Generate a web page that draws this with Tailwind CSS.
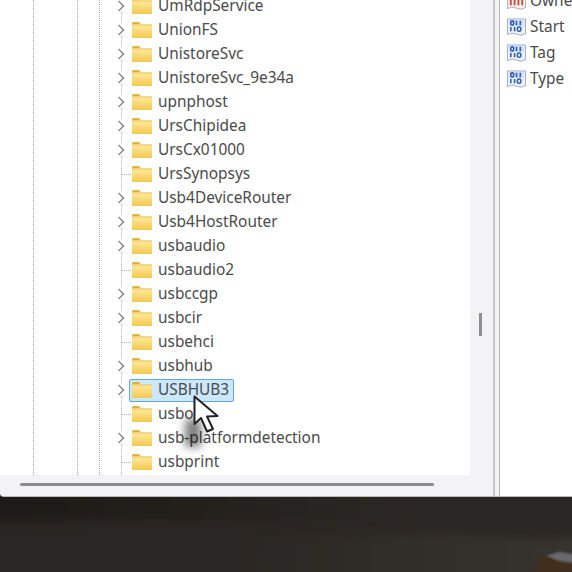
<!DOCTYPE html>
<html><head><meta charset="utf-8"><script src="https://cdn.jsdelivr.net/npm/@tailwindcss/browser@4"></script></head>
<body class="m-0 bg-[#2b2723]">
<div class="relative w-[572px] h-[572px] overflow-hidden bg-[#2a2622] flex flex-col font-['Noto_Sans','Open_Sans',sans-serif] text-[#4a4a4a]">
  <svg width="0" height="0" class="absolute"><defs>
    <linearGradient id="fg" x1="0" y1="0" x2="0" y2="1"><stop offset="0" stop-color="#fdeaa3"/><stop offset="1" stop-color="#f4c94f"/></linearGradient>
    <linearGradient id="dl" x1="0" y1="0" x2="1" y2="0"><stop offset="0" stop-color="#1d1916"/><stop offset="0.5" stop-color="#231f1b"/><stop offset="1" stop-color="#2b2724"/></linearGradient>
    <linearGradient id="lt" x1="0" y1="0" x2="1" y2="0"><stop offset="0" stop-color="#2b2724"/><stop offset="1" stop-color="#38352f"/></linearGradient>
    <symbol id="folder" viewBox="0 0 20 18"><path d="M0 2.500Q0 1 1.500 1H7l2 2.500H0z" fill="#e2b138"/><path d="M0 3.500h20v13.500H0z" fill="url(#fg)"/><path d="M0 4h20" stroke="#e9bf50" stroke-width="1"/></symbol>
    <symbol id="chev" viewBox="0 0 8 12"><path d="M1.500 1l5 5-5 5" fill="none" stroke="#8f8f8f" stroke-width="1.600"/></symbol>
    <symbol id="reg" viewBox="0 0 22 20"><path d="M1.500 1h19v15.500q-5 3-9.500 .5t-9.500 .5z" fill="#eef0fa" stroke="#a3a9c9"/><rect x="3" y="2" width="16" height="6.500" fill="#d5dff8"/><g fill="none" stroke="#2f62b3" stroke-width="1.700"><rect x="5" y="3" width="3" height="4.500" rx="1.400"/><path d="M11 3v4.500M15 3v4.500"/><path d="M5 9.500v4.500M9 9.500v4.500"/><rect x="12" y="9.500" width="3.500" height="4.500" rx="1.400"/></g></symbol>
    <symbol id="regred" viewBox="0 0 22 20"><path d="M1.500 1h19v15.500q-5 3-9.500 .5t-9.500 .5z" fill="#f7eeee" stroke="#b9a7a7"/><path d="M5 3v11M9 3v11M13 3v11M17 3v11" stroke="#c9503f" stroke-width="2"/></symbol>
  </defs></svg>

  <div class="flex h-[497px] shrink-0 bg-[#f3f2f5] border-b border-[#b9b9b9] rounded-bl-[4px]">
    <div class="flex flex-col w-[492px] shrink-0 bg-[#f3f2f5] rounded-bl-[4px]">
      <div class="relative w-[470px] h-[475px] bg-white overflow-hidden">
        <div class="absolute top-0 bottom-0 left-[33px] border-l border-dotted border-[#a3a3a3]"></div>
        <div class="absolute top-0 bottom-0 left-[77px] border-l border-dotted border-[#a3a3a3]"></div>
        <div class="absolute top-0 bottom-0 left-[99px] border-l border-dotted border-[#a3a3a3]"></div>
        <div class="absolute top-0 bottom-0 left-[121px] border-l border-dotted border-[#b5b5b5]"></div>
        <ul class="relative -mt-[6px] pl-[117px] text-[15.4px] leading-6">
          <li class="flex items-center h-6"><span class="w-[15px] bg-white flex"><svg class="w-2 h-3"><use href="#chev"/></svg></span><svg class="w-5 h-[18px]"><use href="#folder"/></svg><span class="ml-[6px] pb-[1px]">UmRdpService</span></li>
          <li class="flex items-center h-6"><span class="w-[15px] bg-white flex"><svg class="w-2 h-3"><use href="#chev"/></svg></span><svg class="w-5 h-[18px]"><use href="#folder"/></svg><span class="ml-[6px] pb-[1px]">UnionFS</span></li>
          <li class="flex items-center h-6"><span class="w-[15px] bg-white flex"><svg class="w-2 h-3"><use href="#chev"/></svg></span><svg class="w-5 h-[18px]"><use href="#folder"/></svg><span class="ml-[6px] pb-[1px]">UnistoreSvc</span></li>
          <li class="flex items-center h-6"><span class="w-[15px] bg-white flex"><svg class="w-2 h-3"><use href="#chev"/></svg></span><svg class="w-5 h-[18px]"><use href="#folder"/></svg><span class="ml-[6px] pb-[1px]">UnistoreSvc_9e34a</span></li>
          <li class="flex items-center h-6"><span class="w-[15px] bg-white flex"><svg class="w-2 h-3"><use href="#chev"/></svg></span><svg class="w-5 h-[18px]"><use href="#folder"/></svg><span class="ml-[6px] pb-[1px]">upnphost</span></li>
          <li class="flex items-center h-6"><span class="w-[15px] bg-white flex"><svg class="w-2 h-3"><use href="#chev"/></svg></span><svg class="w-5 h-[18px]"><use href="#folder"/></svg><span class="ml-[6px] pb-[1px]">UrsChipidea</span></li>
          <li class="flex items-center h-6"><span class="w-[15px] bg-white flex"><svg class="w-2 h-3"><use href="#chev"/></svg></span><svg class="w-5 h-[18px]"><use href="#folder"/></svg><span class="ml-[6px] pb-[1px]">UrsCx01000</span></li>
          <li class="flex items-center h-6"><span class="w-[15px] flex items-center"><span class="w-[10px] ml-[4px] border-t border-dotted border-[#b5b5b5]"></span></span><svg class="w-5 h-[18px]"><use href="#folder"/></svg><span class="ml-[6px] pb-[1px]">UrsSynopsys</span></li>
          <li class="flex items-center h-6"><span class="w-[15px] bg-white flex"><svg class="w-2 h-3"><use href="#chev"/></svg></span><svg class="w-5 h-[18px]"><use href="#folder"/></svg><span class="ml-[6px] pb-[1px]">Usb4DeviceRouter</span></li>
          <li class="flex items-center h-6"><span class="w-[15px] bg-white flex"><svg class="w-2 h-3"><use href="#chev"/></svg></span><svg class="w-5 h-[18px]"><use href="#folder"/></svg><span class="ml-[6px] pb-[1px]">Usb4HostRouter</span></li>
          <li class="flex items-center h-6"><span class="w-[15px] bg-white flex"><svg class="w-2 h-3"><use href="#chev"/></svg></span><svg class="w-5 h-[18px]"><use href="#folder"/></svg><span class="ml-[6px] pb-[1px]">usbaudio</span></li>
          <li class="flex items-center h-6"><span class="w-[15px] flex items-center"><span class="w-[10px] ml-[4px] border-t border-dotted border-[#b5b5b5]"></span></span><svg class="w-5 h-[18px]"><use href="#folder"/></svg><span class="ml-[6px] pb-[1px]">usbaudio2</span></li>
          <li class="flex items-center h-6"><span class="w-[15px] bg-white flex"><svg class="w-2 h-3"><use href="#chev"/></svg></span><svg class="w-5 h-[18px]"><use href="#folder"/></svg><span class="ml-[6px] pb-[1px]">usbccgp</span></li>
          <li class="flex items-center h-6"><span class="w-[15px] bg-white flex"><svg class="w-2 h-3"><use href="#chev"/></svg></span><svg class="w-5 h-[18px]"><use href="#folder"/></svg><span class="ml-[6px] pb-[1px]">usbcir</span></li>
          <li class="flex items-center h-6"><span class="w-[15px] flex items-center"><span class="w-[10px] ml-[4px] border-t border-dotted border-[#b5b5b5]"></span></span><svg class="w-5 h-[18px]"><use href="#folder"/></svg><span class="ml-[6px] pb-[1px]">usbehci</span></li>
          <li class="flex items-center h-6"><span class="w-[15px] bg-white flex"><svg class="w-2 h-3"><use href="#chev"/></svg></span><svg class="w-5 h-[18px]"><use href="#folder"/></svg><span class="ml-[6px] pb-[1px]">usbhub</span></li>
          <li class="flex items-center h-6"><span class="w-[15px] bg-white flex"><svg class="w-2 h-3"><use href="#chev"/></svg></span><span class="flex items-center h-[23px] -ml-[3px] pl-[3px] pr-[4px] rounded-[2px] bg-[#cce8ff] border border-[#5fa8e0]"><svg class="w-5 h-[18px] -ml-[1px]"><use href="#folder"/></svg><span class="ml-[6px] pb-[1px]">USBHUB3</span></span></li>
          <li class="flex items-center h-6"><span class="w-[15px] flex items-center"><span class="w-[10px] ml-[4px] border-t border-dotted border-[#b5b5b5]"></span></span><svg class="w-5 h-[18px]"><use href="#folder"/></svg><span class="ml-[6px] pb-[1px]">usbo<span class="text-white">hci</span></span></li>
          <li class="flex items-center h-6"><span class="w-[15px] bg-white flex"><svg class="w-2 h-3"><use href="#chev"/></svg></span><svg class="w-5 h-[18px]"><use href="#folder"/></svg><span class="ml-[6px] pb-[1px]">usb-platformdetection</span></li>
          <li class="flex items-center h-6"><span class="w-[15px] flex items-center"><span class="w-[10px] ml-[4px] border-t border-dotted border-[#b5b5b5]"></span></span><svg class="w-5 h-[18px]"><use href="#folder"/></svg><span class="ml-[6px] pb-[1px]">usbprint</span></li>
        </ul>
      </div>
      <div class="flex-1 flex items-center pl-5 pb-[2px]">
        <div class="w-[414px] h-[3px] rounded-full bg-[#8b8b8b]"></div>
      </div>
    </div>
    <div class="w-[2px] bg-[#c4c4c8] shrink-0 ml-[1px]"></div>
    <div class="w-[4px] shrink-0 bg-[#f3f2f5]"></div>
    <div class="flex-1 min-w-0 overflow-hidden bg-white border-l border-[#b5b5b5]">
      <ul class="-mt-[12px] pl-[6px] text-[15.4px]">
        <li class="flex items-center gap-[3px] h-[26px]"><svg class="w-[21px] h-[19px] shrink-0"><use href="#regred"/></svg><span class="pb-[1px]">Owner</span></li>
        <li class="flex items-center gap-[3px] h-[26px]"><svg class="w-[21px] h-[19px] shrink-0"><use href="#reg"/></svg><span class="pb-[1px]">Start</span></li>
        <li class="flex items-center gap-[3px] h-[26px]"><svg class="w-[21px] h-[19px] shrink-0"><use href="#reg"/></svg><span class="pb-[1px]">Tag</span></li>
        <li class="flex items-center gap-[3px] h-[26px]"><svg class="w-[21px] h-[19px] shrink-0"><use href="#reg"/></svg><span class="pb-[1px]">Type</span></li>
      </ul>
    </div>
  </div>

  <svg class="flex-1 w-full" viewBox="0 0 572 74" preserveAspectRatio="none">
    <rect width="572" height="74" fill="#2b2724"/>
    <rect x="-20" y="-20" width="420" height="44" fill="url(#dl)" class="blur-[6px]"/>
    <path d="M250 42Q380 32 480 38T600 34V90H250z" fill="url(#lt)" class="blur-[4px]"/>
    <path d="M534 80Q536 62 542 58L560 62 580 68V80z" fill="#3f2f1c" class="blur-[1px]"/>
    <path d="M546 58L560 54 580 58V66L558 63z" fill="#69696c" class="blur-[1px]"/>
  </svg>

  <!-- cursor -->
  <div class="absolute left-[185px] top-[419px] w-[16px] h-[28px] bg-black/50 blur-[4px]"></div>
  <svg class="absolute left-[192px] top-[394px]" width="30" height="42" viewBox="0 0 30 42"><path d="M2.500 2.500V30L9 24 15 37.500 21 35 15 22.500 25.500 22z" fill="#fff" stroke="#222" stroke-width="2" stroke-linejoin="round"/></svg>

  <div class="absolute left-[479px] top-[313px] w-[3px] h-[23px] bg-[#8f8f8f]"></div>
</div>
</body></html>
